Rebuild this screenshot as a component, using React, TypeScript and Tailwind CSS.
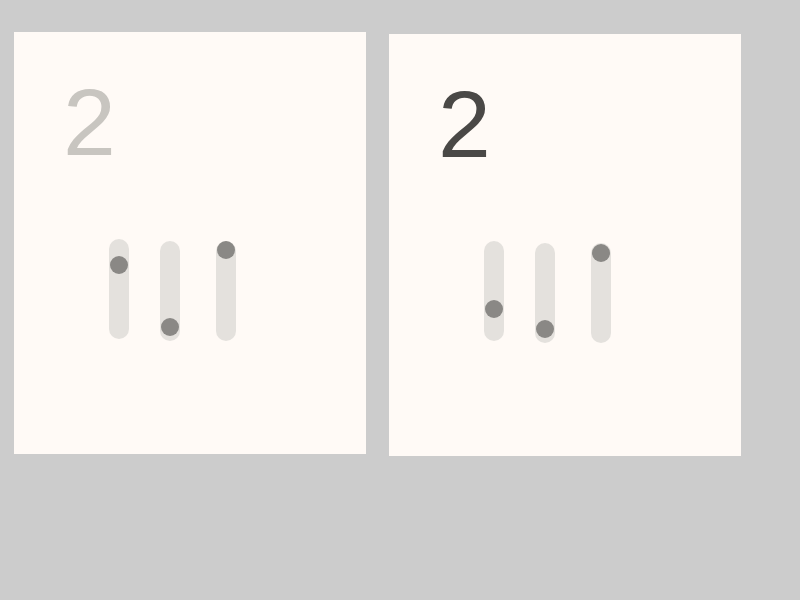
const cards = [
  { digit: 'text-[#c8c5c0]', offset: 'mt-0', thumbs: [25.5, 85.5, 9] },
  { digit: 'text-[#4a4846]', offset: 'mt-[2px]', thumbs: [67.5, 85.5, 10] },
];

function Track({ top, pos }: { top: string; pos: number }) {
  return (
    <div className={`relative w-5 h-[100px] rounded-full bg-[#e4e1dd] ${top}`}>
      <div
        className="absolute left-[1px] w-[18px] h-[18px] rounded-full bg-[#8a8885]"
        style={{ top: pos - 9 }}
      />
    </div>
  );
}

function Card({ digit, offset, thumbs }: (typeof cards)[number]) {
  return (
    <div className={`w-[352px] h-[422px] bg-[#fffaf6] ${offset}`}>
      <div
        className={`pl-[49px] pt-[43px] text-[95px] leading-none ${digit}`}
        style={{ fontFamily: '"Liberation Sans", Arial, sans-serif' }}
      >
        2
      </div>
      <div className="flex items-start pl-[95px] mt-[69px]">
        <Track top="mt-0" pos={thumbs[0]} />
        <div className="ml-[31px]">
          <Track top="mt-[2px]" pos={thumbs[1]} />
        </div>
        <div className="ml-[36px]">
          <Track top="mt-[2px]" pos={thumbs[2]} />
        </div>
      </div>
    </div>
  );
}

export default function App() {
  return (
    <div className="w-[800px] h-[600px] bg-[#cccccc] flex items-start gap-[23px] pl-[14px] pt-[32px]">
      {cards.map((c, i) => (
        <Card key={i} {...c} />
      ))}
    </div>
  );
}
